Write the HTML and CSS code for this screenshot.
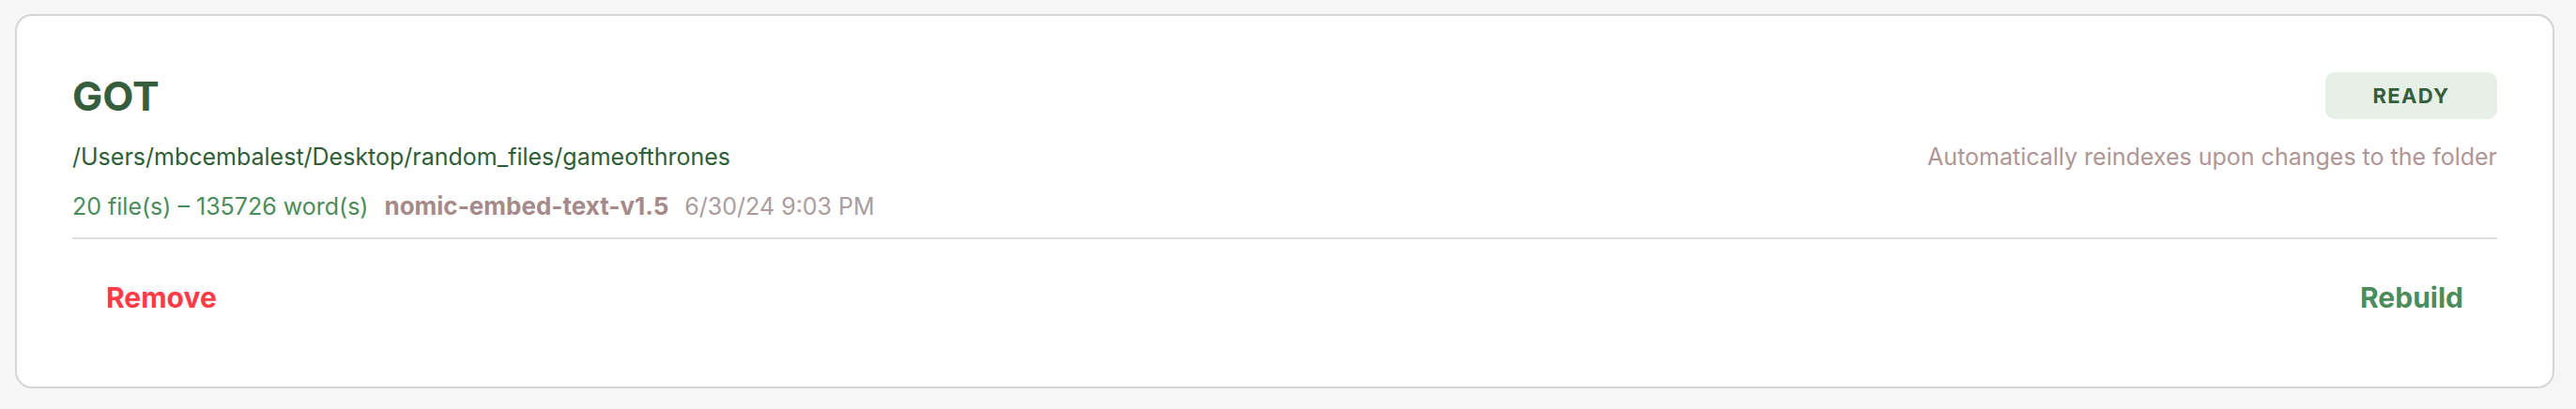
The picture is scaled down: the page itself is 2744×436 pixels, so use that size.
FILE: index.html
```
<!DOCTYPE html>
<html lang="en">
<head>
  <meta charset="UTF-8">
  <meta name="viewport" content="width=device-width, initial-scale=1.0">
  <title>Collections</title>
  <link rel="stylesheet" href="styles.css">
</head>
<body>
  <div class="collection-card">
    <div class="card-top">
      <div class="row head-row">
        <h1 class="collection-name">GOT</h1>
        <span class="status-badge">READY</span>
      </div>
      <div class="row path-row">
        <div class="folder-path">/Users/mbcembalest/Desktop/random_files/gameofthrones</div>
        <div class="watch-note">Automatically reindexes upon changes to the folder</div>
      </div>
      <div class="stats">
        <span class="counts">20 file(s) – 135726 word(s)</span>
        <span class="model">nomic-embed-text-v1.5</span>
        <span class="date">6/30/24 9:03 PM</span>
      </div>
    </div>

    <div class="card-actions">
      <button class="action remove">Remove</button>
      <button class="action rebuild">Rebuild</button>
    </div>
  </div>
</body>
</html>
```

FILE: styles.css
```
:root {
  --green-dark: #365e3d;
  --green: #4b8c5b;
  --mauve: #a68a8a;
  --mauve-light: #ab9d9d;
  --red: #ff3b47;
  --border: #d5d5d5;
}

* {
  box-sizing: border-box;
  margin: 0;
  padding: 0;
}

body {
  font-family: Inter, "Noto Sans", sans-serif;
  background: #f6f6f6;
  padding: 15px 23px 0 16px;
}

.collection-card {
  background: white;
  border: 2px solid var(--border);
  border-radius: 18px;
  padding: 59px 59px 63px 59px;
}

.row {
  display: flex;
  justify-content: space-between;
}

.head-row {
  align-items: center;
  margin-top: 1px;
}

.collection-name {
  font-size: 43px;
  font-weight: 700;
  line-height: 50px;
  color: var(--green-dark);
}

.status-badge {
  width: 183px;
  height: 50px;
  display: flex;
  align-items: center;
  justify-content: center;
  background: #e6f0e7;
  border-radius: 10px;
  color: var(--green-dark);
  font-size: 22px;
  font-weight: 700;
  letter-spacing: 0.06em;
}

.path-row {
  margin-top: 26px;
  font-size: 25px;
  line-height: 29px;
  align-items: baseline;
}

.folder-path {
  color: #2f5d38;
}

.watch-note {
  color: #b09595;
}

.stats {
  margin-top: 23px;
  display: flex;
  align-items: baseline;
  gap: 17px;
  font-size: 25px;
  line-height: 29px;
}

.counts {
  color: var(--green);
}

.model {
  color: var(--mauve);
  font-weight: 700;
  font-size: 26px;
}

.date {
  color: var(--mauve-light);
}

.card-actions {
  margin-top: 18px;
  border-top: 2px solid #e3dfdf;
  padding-top: 31px;
  display: flex;
  justify-content: space-between;
}

.action {
  background: none;
  border: none;
  font-family: inherit;
  font-size: 30px;
  font-weight: 700;
  line-height: 35px;
  padding: 14px 36px;
  cursor: pointer;
}

.remove {
  color: var(--red);
}

.rebuild {
  color: var(--green);
}
```
